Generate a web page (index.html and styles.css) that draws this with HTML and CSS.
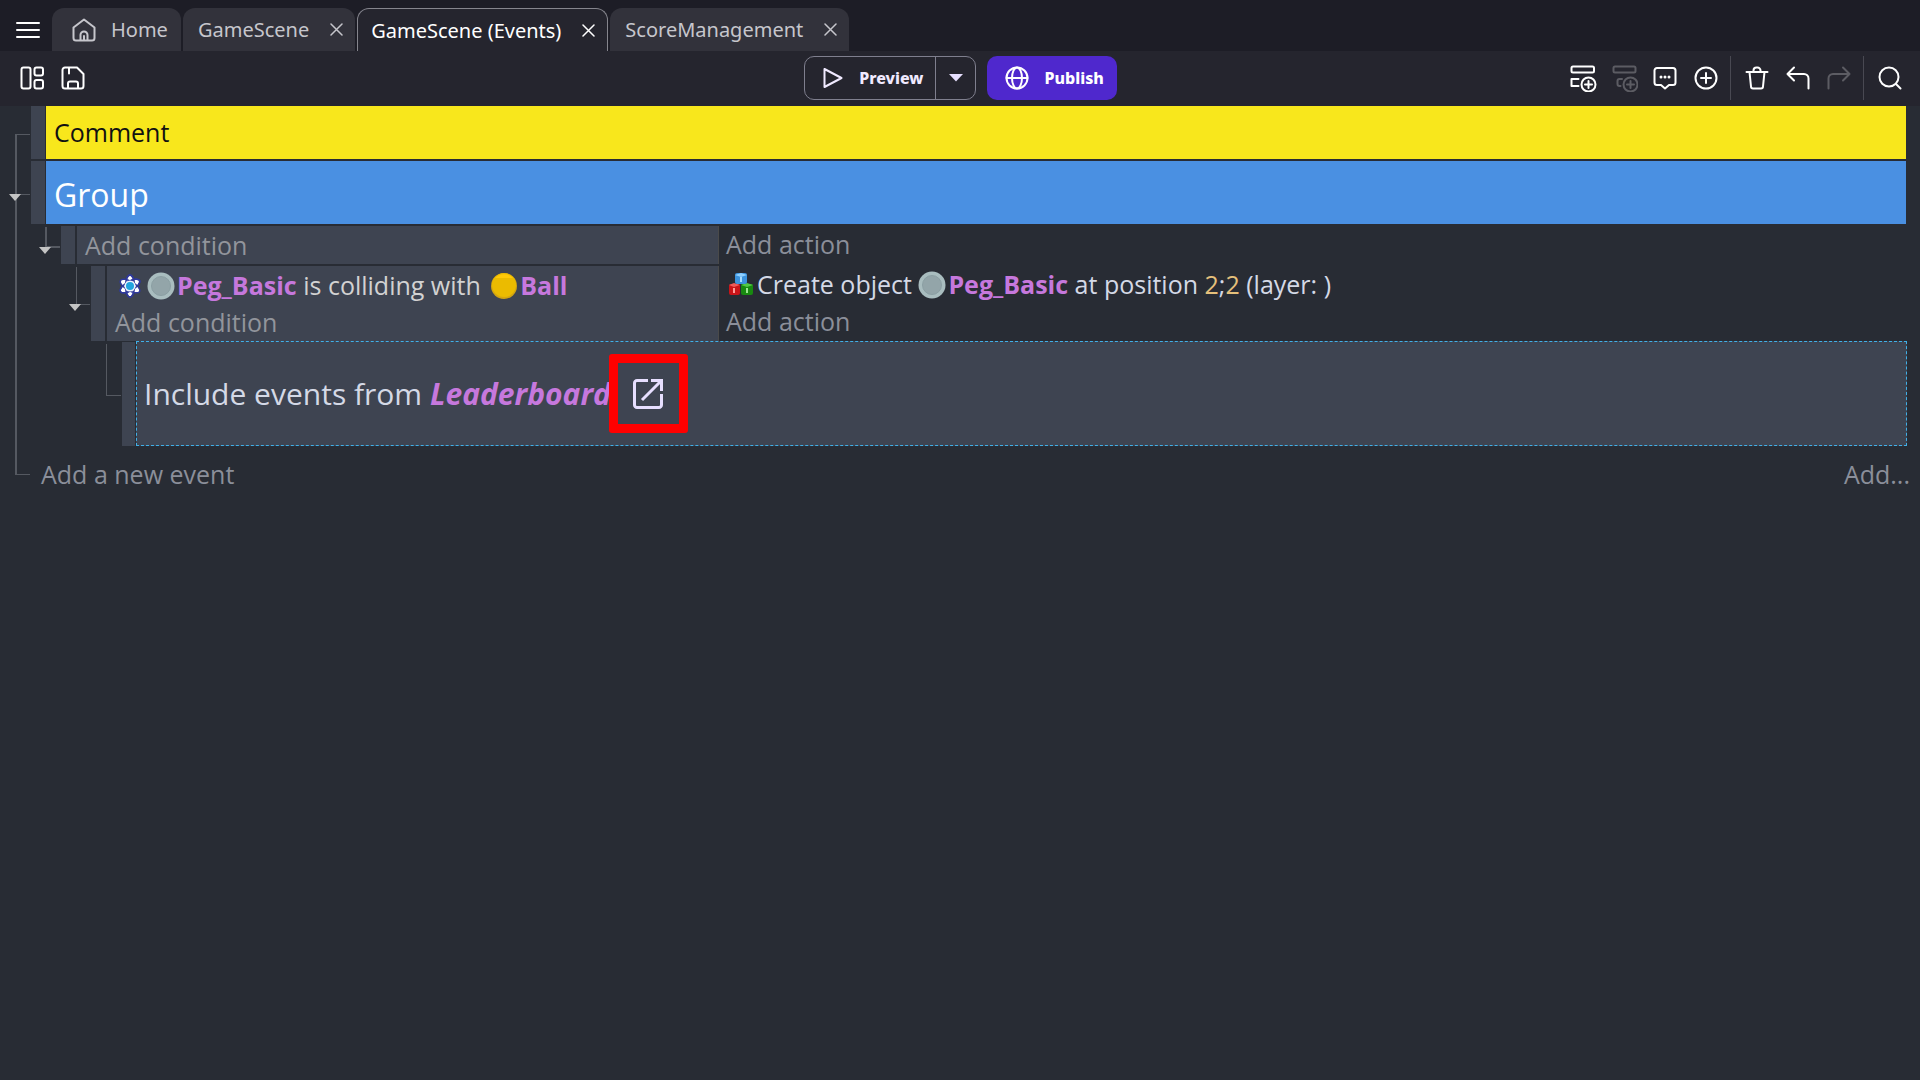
FILE: index.html
```html
<!DOCTYPE html>
<html lang="en">
<head>
<meta charset="utf-8">
<title>GameScene (Events)</title>
<link rel="stylesheet" href="styles.css">
</head>
<body>
<svg class="defs" aria-hidden="true">
  <symbol id="close" viewBox="0 0 13 13"><path d="M1 1l11 11M12 1L1 12"/></symbol>
  <symbol id="peg" viewBox="0 0 28 28"><circle cx="14" cy="14" r="13.5" fill="#a9bdbf"/><circle cx="14" cy="14" r="9.5" fill="#93a5a9" stroke="#8b9fa3" stroke-width="1"/></symbol>
</svg>

<header class="titlebar">
  <button class="menu-button" aria-label="Main menu"><svg class="icon" width="24" height="18" viewBox="0 0 24 18"><path d="M1 2h22M1 9h22M1 16h22"/></svg></button>
  <nav class="tabs" aria-label="Open editors">
    <div class="tab tab-home"><button class="tab-label"><svg class="icon" width="24" height="24" viewBox="0 0 24 24"><path d="M1.500 9.500L12 1.500l10.500 8V20a2.500 2.500 0 0 1-2.500 2.500H4A2.500 2.500 0 0 1 1.500 20zM8.500 22.500V17a3.500 3.500 0 0 1 7 0v5.500M12 18v4"/></svg>Home</button></div>
    <div class="tab"><button class="tab-label">GameScene</button><button class="tab-close" aria-label="Close GameScene"><svg class="icon" width="13" height="13"><use href="#close"/></svg></button></div>
    <div class="tab tab-active"><button class="tab-label">GameScene (Events)</button><button class="tab-close" aria-label="Close GameScene (Events)"><svg class="icon" width="13" height="13"><use href="#close"/></svg></button></div>
    <div class="tab"><button class="tab-label">ScoreManagement</button><button class="tab-close" aria-label="Close ScoreManagement"><svg class="icon" width="13" height="13"><use href="#close"/></svg></button></div>
  </nav>
</header>

<div class="toolbar">
  <div class="tools">
    <button class="tool" aria-label="Project manager"><svg class="icon" width="24" height="24" viewBox="0 0 24 24"><rect x="1.500" y="1.500" width="9" height="21" rx="2"/><rect x="14.500" y="1.500" width="8.500" height="8" rx="2"/><rect x="14.500" y="14" width="8.500" height="8.500" rx="2"/></svg></button>
    <button class="tool" aria-label="Save"><svg class="icon" width="24" height="24" viewBox="0 0 24 24"><path d="M4 1.500h12L22.500 8v12a2.500 2.500 0 0 1-2.500 2.500H4A2.500 2.500 0 0 1 1.500 20V4A2.500 2.500 0 0 1 4 1.500zM8 2v5.500M7 22v-4.500a2 2 0 0 1 2-2h6a2 2 0 0 1 2 2V22"/></svg></button>
  </div>
  <div class="launch">
    <div class="preview">
      <button class="preview-run"><svg class="icon icon-play" width="20" height="20" viewBox="0 0 20 20"><path d="M1.500 1v18L18.500 10z"/></svg>Preview</button>
      <button class="preview-more" aria-label="Preview options"><svg width="14" height="8" viewBox="0 0 14 8"><path d="M0 0h14L7 7.500z" fill="#e7dfff"/></svg></button>
    </div>
    <button class="publish"><svg class="icon" width="24" height="24" viewBox="0 0 24 24"><circle cx="12" cy="12" r="10.500"/><ellipse cx="12" cy="12" rx="5" ry="10.500"/><path d="M1.500 12h21"/></svg>Publish</button>
  </div>
  <div class="tools tools-end">
    <button class="tool" aria-label="Add event"><svg class="icon" width="28" height="28" viewBox="0 0 28 28"><rect x="2.500" y="2.500" width="22.500" height="6" rx="1.500"/><path d="M9.500 15h-7v7h7"/><circle cx="19.500" cy="20.500" r="7"/><path d="M16 20.500h7M19.500 17v7"/></svg></button>
    <button class="tool" aria-label="Add sub-event" disabled><svg class="icon" width="28" height="28" viewBox="0 0 28 28"><rect x="3.500" y="2.500" width="22" height="6" rx="1.500"/><path d="M12 15H9.500a2 2 0 0 0-2 2v3a2 2 0 0 0 2 2h1"/><circle cx="20.500" cy="20.500" r="7"/><path d="M17 20.500h7M20.500 17v7"/></svg></button>
    <button class="tool" aria-label="Add comment"><svg class="icon" width="24" height="24" viewBox="0 0 24 24"><path d="M4 2h16a2.500 2.500 0 0 1 2.500 2.500v12A2.500 2.500 0 0 1 20 19h-4l-4 3.500L8 19H4a2.500 2.500 0 0 1-2.500-2.500v-12A2.500 2.500 0 0 1 4 2z"/><path class="dots" d="M8 11h.01M12 11h.01M16 11h.01"/></svg></button>
    <button class="tool" aria-label="Add another event"><svg class="icon" width="24" height="24" viewBox="0 0 24 24"><circle cx="12" cy="12" r="10.500"/><path d="M7 12h10M12 7v10"/></svg></button>
    <span class="tool-divider"></span>
    <button class="tool" aria-label="Delete"><svg class="icon" width="24" height="24" viewBox="0 0 24 24"><path d="M1.500 6h21M4.500 6l1.500 14.500a2 2 0 0 0 2 2h8a2 2 0 0 0 2-2L19.500 6M8.500 6V4.500a3 3 0 0 1 3-3h1a3 3 0 0 1 3 3V6"/></svg></button>
    <button class="tool" aria-label="Undo"><svg class="icon" width="24" height="24" viewBox="0 0 24 24"><path d="M8 1.500L1.500 8 8 14.500M1.500 8H18a4.500 4.500 0 0 1 4.500 4.500v10"/></svg></button>
    <button class="tool" aria-label="Redo" disabled><svg class="icon" width="24" height="24" viewBox="0 0 24 24"><path d="M16 1.500L22.500 8 16 14.500M22.500 8H6a4.500 4.500 0 0 0-4.500 4.500v10"/></svg></button>
    <span class="tool-divider"></span>
    <button class="tool" aria-label="Search"><svg class="icon" width="24" height="24" viewBox="0 0 24 24"><circle cx="11" cy="11" r="9.500"/><path d="M18 18l4.500 4.500"/></svg></button>
  </div>
</div>

<main>
<ul class="events">
  <li class="event event-first">
    <div class="row row-comment"><span class="handle"></span><div class="comment">Comment</div></div>
  </li>
  <li class="event event-group">
    <div class="row row-group"><span class="handle"></span><div class="group">Group</div></div>
    <button class="fold" aria-label="Fold group"></button>
    <ul class="children">
      <li class="event event-sub event-empty">
        <div class="row"><span class="handle"></span>
          <div class="conditions"><button class="add">Add condition</button></div>
          <div class="actions"><button class="add">Add action</button></div>
        </div>
        <button class="fold" aria-label="Fold event"></button>
        <ul class="children">
          <li class="event event-sub event-collision">
            <div class="row"><span class="handle"></span>
              <div class="conditions">
                <p class="instruction"><svg class="physics" width="24" height="26" viewBox="0 0 24 26"><g fill="#fff" stroke="#303a9c" stroke-width="1.500"><ellipse cx="12" cy="13" rx="4.500" ry="11"/><ellipse cx="12" cy="13" rx="4.500" ry="11" transform="rotate(60 12 13)"/><ellipse cx="12" cy="13" rx="4.500" ry="11" transform="rotate(120 12 13)"/></g><g fill="none" stroke="#303a9c" stroke-width="1.500"><ellipse cx="12" cy="13" rx="4.500" ry="11"/><ellipse cx="12" cy="13" rx="4.500" ry="11" transform="rotate(60 12 13)"/></g><circle cx="12" cy="13" r="5.500" fill="#eef4ff"/><circle cx="12" cy="13" r="4" fill="#22a4de"/></svg><svg class="object" width="28" height="28"><use href="#peg"/></svg><b>Peg_Basic</b> is colliding with <svg class="object object-ball" width="28" height="28" viewBox="0 0 28 28"><circle cx="14" cy="14" r="13" fill="#d3a510"/><circle cx="14" cy="13" r="12" fill="#ebbb00"/><path d="M5 6a12.500 12.500 0 0 1 18 0z" fill="#ffc908"/></svg><b>Ball</b></p>
                <button class="add">Add condition</button>
              </div>
              <div class="actions">
                <p class="instruction"><svg class="cubes" width="26" height="26" viewBox="0 0 26 26"><rect x="1" y="12" width="11" height="11" rx="2" fill="#c91418"/><path d="M1 13l5-2 6 2-6 2z" fill="#ef5a58"/><path d="M6 16v5" stroke="#ff9a96" stroke-width="2"/><rect x="13" y="12" width="12" height="11" rx="2" fill="#188a10"/><path d="M13 13l6-2 6 2-6 2z" fill="#52c944"/><path d="M19 16v5" stroke="#9ee892" stroke-width="2"/><rect x="7" y="1" width="12" height="11" rx="2" fill="#3b92dc"/><path d="M7 3l6-2 6 2-6 2z" fill="#8fd0ff"/><path d="M13 5v5" stroke="#a6dcff" stroke-width="2"/></svg>Create object <svg class="object" width="28" height="28"><use href="#peg"/></svg><b>Peg_Basic</b> at position <span class="number">2</span>;<span class="number">2</span> (layer: )</p>
                <button class="add">Add action</button>
              </div>
            </div>
            <button class="fold" aria-label="Fold event"></button>
            <ul class="children">
              <li class="event event-sub event-link">
                <div class="row"><span class="handle"></span>
                  <div class="link"><span>Include events from <b><i>Leaderboard</i></b></span><button class="open-link" aria-label="Open Leaderboard"><svg width="30" height="30" viewBox="0 0 30 30" fill="none" stroke="#e7dfff" stroke-width="3"><path d="M15 1.500H4A2.500 2.500 0 0 0 1.500 4v22A2.500 2.500 0 0 0 4 28.500h22a2.500 2.500 0 0 0 2.500-2.500V15M18 1.500h10.500V12M28 2L9 21"/></svg></button></div>
                </div>
              </li>
            </ul>
          </li>
        </ul>
      </li>
    </ul>
  </li>
  <li class="event event-last">
    <div class="new-event"><button class="add">Add a new event</button><button class="add">Add...</button></div>
  </li>
</ul>
</main>
</body>
</html>
```
FILE: styles.css
```css
* { box-sizing: border-box; }

body {
  --panel: #3e4451;
  --line: #555961;
  --split: calc(35vw + 47px);
  margin: 0;
  min-height: 100vh;
  background: #282c34;
  color: #d4d9e6;
  font-family: "Open Sans", "Noto Sans", sans-serif;
}

button {
  margin: 0;
  padding: 0;
  border: 0;
  background: none;
  color: inherit;
  font: inherit;
  cursor: pointer;
}

svg { display: block; flex: none; }
.defs { display: none; }

.icon {
  fill: none;
  stroke: currentColor;
  stroke-width: 2;
  stroke-linecap: round;
  stroke-linejoin: round;
}

/* Title bar and tabs */
.titlebar {
  display: flex;
  align-items: flex-end;
  height: 51px;
  background: #1d1d26;
  color: #fff;
}

.menu-button { padding: 12px 12px 12px 16px; }

.tabs {
  display: flex;
  gap: 2px;
  font-family: "Noto Sans", sans-serif;
  font-size: 20px;
}

.tab {
  display: flex;
  align-items: center;
  height: 43px;
  border-radius: 12px 12px 0 0;
  background: #32323b;
  color: #c6c6cc;
}

.tab-label {
  display: flex;
  align-items: center;
  gap: 15px;
  height: 100%;
  padding-left: 15px;
}

.tab-home .tab-label { padding: 0 13px 0 20px; }
.tab-close { padding: 14px 12px 14px 21px; }
.tab-close .icon { stroke-width: 1.5; }

.tab-active {
  border: 1px solid #85858d;
  border-bottom: 0;
  background: #25252e;
  color: #fff;
}

.tab-active .tab-label { padding-left: 13px; }

/* Toolbar */
.toolbar {
  display: grid;
  grid-template-columns: 1fr auto 1fr;
  align-items: start;
  height: 55px;
  padding: 5px 10px 0 11px;
  background: #25252e;
  color: #fff;
}

.tools { display: flex; align-items: center; }
.tools-end { justify-content: flex-end; }

.tool {
  display: flex;
  align-items: center;
  justify-content: center;
  width: 41px;
  height: 44px;
}

.tool:disabled { color: #5c5c63; }
.dots { stroke-width: 3; }

.tool-divider {
  width: 1px;
  height: 44px;
  margin: 0 5px 0 4px;
  background: #494952;
}

.launch {
  display: flex;
  gap: 11px;
  font-family: "Noto Sans", sans-serif;
  font-size: 16px;
  font-weight: 800;
  line-height: 20px;
}

.preview {
  display: flex;
  height: 44px;
  border: 1px solid #7f7f8e;
  border-radius: 10px;
  color: #f0eaff;
}

.preview-run {
  display: flex;
  align-items: center;
  gap: 16px;
  padding: 0 12px 0 18px;
}

.preview-more {
  display: flex;
  align-items: center;
  justify-content: center;
  width: 40px;
  border-left: 1px solid #7f7f8e;
}

.publish {
  display: flex;
  align-items: center;
  gap: 15px;
  height: 44px;
  padding: 0 13px 0 18px;
  border-radius: 10px;
  background: #4f28cd;
}

/* Events sheet */
.events,
.children {
  margin: 0;
  padding: 0;
  list-style: none;
}

.events { padding: 0 14px 0 31px; font-size: 25px; }
.children { margin-left: 30px; }

.event { position: relative; padding-top: 2px; }
.event-first { padding-top: 0; }

/* Tree connectors: vertical trunk and horizontal branch, in the left gutter */
.event::before,
.event::after {
  content: "";
  position: absolute;
  background: var(--line);
}

.event::before { left: -16px; top: 0; bottom: 0; width: 2px; }
.event::after { left: -16px; top: 28px; width: 15px; height: 1px; }
.event-first::before { top: 28px; }
.event-group::after { top: 35px; }
.event-last::before { bottom: auto; height: 28px; }

.event-sub::before { top: 3px; bottom: auto; height: 21px; }
.event-sub::after { top: 22px; height: 2px; }
.event-collision::before { left: -15px; width: 1px; height: 38px; }
.event-collision::after { top: 40px; height: 1px; }
.event-link::before { width: 1px; height: 52px; }
.event-link::after { top: 54px; height: 1px; }

.fold {
  position: absolute;
  z-index: 1;
  left: -22px;
  width: 12px;
  height: 7px;
  background: #c4c4c4;
  clip-path: polygon(0 0, 100% 0, 50% 100%);
}

.event-group > .fold { top: 35px; }
.event-empty > .fold { top: 23px; }
.event-collision > .fold { top: 40px; }

.row { display: flex; gap: 2px; }
.handle { flex: none; width: 14px; background: var(--panel); }
.row-comment,
.row-group { gap: 1px; }

.comment,
.group {
  flex: 1;
  padding: 0 8px;
}

.comment { background: #f8e71c; color: #111; line-height: 53px; }

.group {
  padding-top: 5px;
  background: #4a90e2;
  color: #fff;
  font-size: 32px;
  line-height: 58px;
}

.conditions {
  flex: none;
  width: calc(var(--split) - 77px);
  padding: 1px 8px;
  border-right: 1px solid #4a4a4a;
  background: var(--panel);
  color: #d2d2d2;
}

.event-collision .conditions { width: calc(var(--split) - 107px); }
.actions { flex: 1; padding: 0 5px; }

.add {
  display: block;
  color: #92959c;
  line-height: 36px;
}

.actions .add,
.new-event .add { color: #8b8f9a; }

.instruction {
  display: flex;
  align-items: center;
  margin: 0;
  line-height: 37px;
  white-space: pre;
}

.instruction b,
.link b { color: #c678dd; }
.object { margin-right: 2px; }
.object-ball { margin-left: 3px; }
.physics { margin: 0 5px 0 3px; }
.cubes { margin: 0 3px 0 2px; }
.number { color: #e5c07b; }

.event-link { padding-top: 0; margin-left: 1px; }
.event-link .row { gap: 1px; }
.event-link .handle { width: 13px; margin-top: 1px; }

.link {
  display: flex;
  flex: 1;
  align-items: center;
  height: 105px;
  margin-right: -1px;
  padding: 0 7px;
  border: 1px dashed #40b0e8;
  background: var(--panel);
  font-size: 30px;
}

.open-link {
  display: flex;
  align-items: center;
  justify-content: center;
  width: 79px;
  height: 79px;
  margin-left: -2px;
  border: 9px solid #f00;
  border-radius: 3px;
}

.new-event {
  display: flex;
  justify-content: space-between;
  margin-right: -4px;
  padding: 8px 0 0 10px;
}
```
